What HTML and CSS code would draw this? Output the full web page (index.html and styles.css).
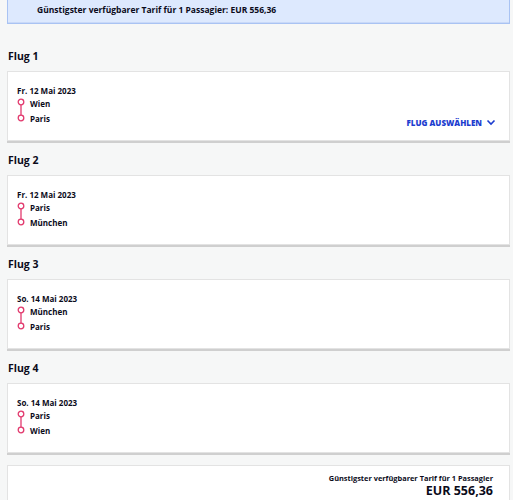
FILE: index.html
```html
<!DOCTYPE html>
<html lang="de">
<head>
  <meta charset="UTF-8">
  <meta name="viewport" content="width=device-width, initial-scale=1.0">
  <title>Flugauswahl</title>
  <link rel="stylesheet" href="styles.css">
</head>
<body>
  <div class="page">
    <div class="fare-banner">Günstigster verfügbarer Tarif für 1 Passagier: EUR 556,36</div>

    <section class="flight">
      <h3>Flug 1</h3>
      <div class="flight-card">
        <div class="route">
          <div class="date">Fr. 12 Mai 2023</div>
          <div class="stops">
            <svg class="route-line" width="8" height="24" viewBox="0 0 8 24">
              <circle cx="4" cy="4" r="2.8" />
              <line x1="4" y1="6.8" x2="4" y2="17.2" />
              <circle cx="4" cy="20" r="2.8" />
            </svg>
            <div class="cities">
              <span>Wien</span>
              <span>Paris</span>
            </div>
          </div>
        </div>
        <a href="#" class="select-flight">FLUG AUSWÄHLEN
          <svg width="10" height="7" viewBox="0 0 10 7"><polyline points="1.5,1.5 5,5 8.5,1.5" /></svg>
        </a>
      </div>
    </section>

    <section class="flight">
      <h3>Flug 2</h3>
      <div class="flight-card">
        <div class="route">
          <div class="date">Fr. 12 Mai 2023</div>
          <div class="stops">
            <svg class="route-line" width="8" height="24" viewBox="0 0 8 24">
              <circle cx="4" cy="4" r="2.8" />
              <line x1="4" y1="6.8" x2="4" y2="17.2" />
              <circle cx="4" cy="20" r="2.8" />
            </svg>
            <div class="cities">
              <span>Paris</span>
              <span>München</span>
            </div>
          </div>
        </div>
      </div>
    </section>

    <section class="flight">
      <h3>Flug 3</h3>
      <div class="flight-card">
        <div class="route">
          <div class="date">So. 14 Mai 2023</div>
          <div class="stops">
            <svg class="route-line" width="8" height="24" viewBox="0 0 8 24">
              <circle cx="4" cy="4" r="2.8" />
              <line x1="4" y1="6.8" x2="4" y2="17.2" />
              <circle cx="4" cy="20" r="2.8" />
            </svg>
            <div class="cities">
              <span>München</span>
              <span>Paris</span>
            </div>
          </div>
        </div>
      </div>
    </section>

    <section class="flight">
      <h3>Flug 4</h3>
      <div class="flight-card">
        <div class="route">
          <div class="date">So. 14 Mai 2023</div>
          <div class="stops">
            <svg class="route-line" width="8" height="24" viewBox="0 0 8 24">
              <circle cx="4" cy="4" r="2.8" />
              <line x1="4" y1="6.8" x2="4" y2="17.2" />
              <circle cx="4" cy="20" r="2.8" />
            </svg>
            <div class="cities">
              <span>Paris</span>
              <span>Wien</span>
            </div>
          </div>
        </div>
      </div>
    </section>

    <div class="total-card">
      <div class="total-label">Günstigster verfügbarer Tarif für 1 Passagier</div>
      <div class="total-price">EUR 556,36</div>
    </div>
  </div>
</body>
</html>
```

FILE: styles.css
```css
:root {
  --page-bg: #f6f7f7;
  --banner-bg: #dde9fe;
  --banner-border: #a9c3f3;
  --text-dark: #0b0b1a;
  --pink: #e23a6e;
  --link-blue: #1c3dcf;
  --card-border: #e3e3e3;
}

* {
  box-sizing: border-box;
}

body {
  margin: 0;
  background: var(--page-bg);
  color: var(--text-dark);
  font-family: 'Open Sans', sans-serif;
}

.page {
  padding: 0 3px 40px 7px;
}

.fare-banner {
  background: var(--banner-bg);
  border: 1px solid var(--banner-border);
  border-top: 0;
  box-shadow: inset 0 -1px 0 #c9d9f8;
  padding: 4px 0 7px 29px;
  font-size: 8.5px;
  line-height: 12px;
  font-weight: 700;
}

.flight h3 {
  margin: 0;
  padding: 12px 0 8px 1px;
  font-size: 10.5px;
  line-height: 14px;
  font-weight: 700;
}

.flight:first-of-type h3 {
  padding-top: 25px;
}

.flight-card {
  display: flex;
  justify-content: space-between;
  align-items: flex-end;
  height: 70px;
  background: #fff;
  border: 1px solid var(--card-border);
  box-shadow: 0 2px 0 #cfcfcf;
  padding: 13px 13px 12px 9px;
}

.route {
  align-self: flex-start;
}

.date {
  font-size: 8px;
  line-height: 12px;
  font-weight: 700;
}

.stops {
  display: flex;
  gap: 5px;
  margin-top: 1px;
}

.route-line circle,
.route-line line {
  fill: none;
  stroke: var(--pink);
  stroke-width: 1.3;
}

.cities {
  display: flex;
  flex-direction: column;
  gap: 4px;
  font-size: 8px;
  line-height: 11px;
  font-weight: 700;
}

.select-flight {
  display: flex;
  align-items: center;
  gap: 4px;
  color: var(--link-blue);
  text-decoration: none;
  font-size: 8px;
  font-weight: 800;
}

.select-flight polyline {
  fill: none;
  stroke: var(--link-blue);
  stroke-width: 1.6;
}

.total-card {
  margin-top: 12px;
  background: #fff;
  border: 1px solid var(--card-border);
  padding: 7px 16px 10px;
  text-align: right;
}

.total-label {
  font-size: 7.4px;
  line-height: 11px;
  font-weight: 700;
}

.total-price {
  font-size: 12.5px;
  line-height: 14px;
  font-weight: 700;
}
```
